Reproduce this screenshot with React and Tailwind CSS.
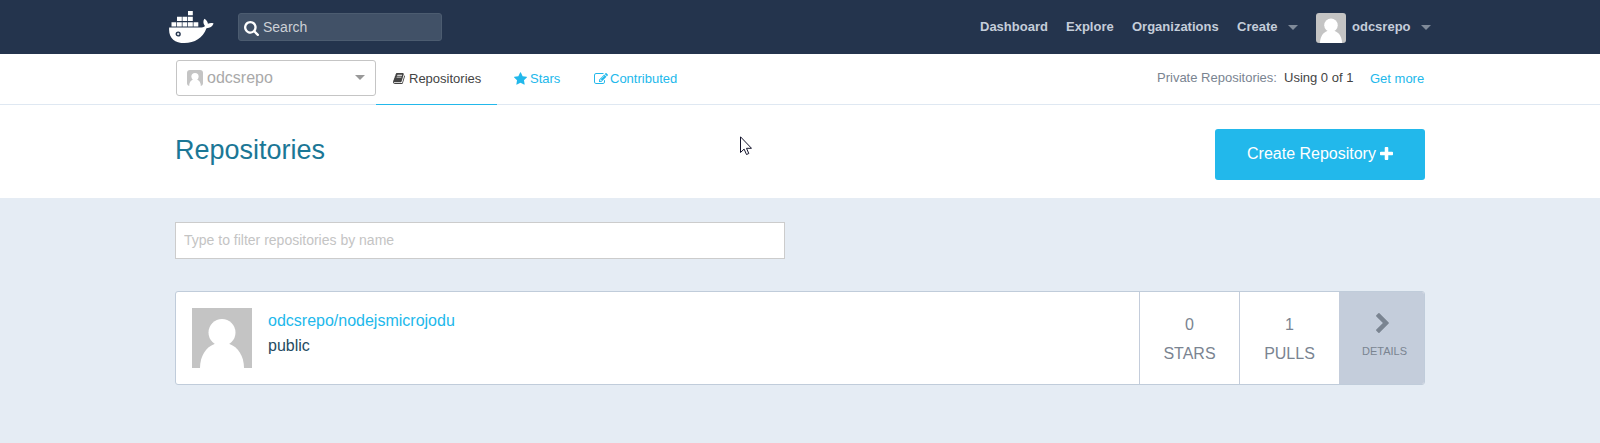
import React from "react";

const ICONS = {
  search: {
    box: "64 128 1664 1664",
    d: "M1216 832q0-185-131.5-316.5t-316.5-131.5-316.5 131.5-131.5 316.5 131.5 316.5 316.5 131.5 316.5-131.5 131.5-316.5zm512 832q0 52-38 90t-90 38q-54 0-90-38l-343-342q-179 124-399 124-143 0-273.5-55.5t-225-150-150-225-55.5-273.5 55.5-273.5 150-225 225-150 273.5-55.5 273.5 55.5 225 150 150 225 55.5 273.5q0 220-124 399l343 343q37 37 37 90z",
  },
  book: {
    box: "64 128 1664 1536",
    d: "M1703 478q40 57 18 129l-275 906q-19 64-76.5 107.5t-122.5 43.5h-923q-77 0-148.5-53.5t-99.5-131.5q-24-67-2-127 0-4 3-27t4-37q1-8-3-21.5t-3-19.5q2-11 8-21t16.5-23.5 16.5-23.5q23-38 45-91.5t30-91.5q3-10 .5-30t-.5-28q3-11 17-28t17-23q21-36 42-92t25-90q1-9-2.5-32t.5-28q4-13 22-30.5t22-22.5q19-26 42.5-84.5t27.5-96.5q1-8-3-25.5t-2-26.5q2-8 9-18t18-23 17-21q8-12 16.5-30.5t15-35 16-36 19.5-32 26.5-23.5 36-11.5 47.5 5.5l-1 3q38-9 51-9h761q74 0 114 56t18 130l-274 906q-36 119-71.5 153.5t-128.5 34.5h-869q-27 0-38 15-11 16-1 43 24 70 144 70h923q29 0 56-15.5t35-41.5l300-987q7-22 5-57 38 15 59 43zm-1064 2q-4 13 2 22.5t20 9.5h608q13 0 25.5-9.5t16.5-22.5l21-64q4-13-2-22.5t-20-9.5h-608q-13 0-25.5 9.5t-16.5 22.5zm-83 256q-4 13 2 22.5t20 9.5h608q13 0 25.5-9.5t16.5-22.5l21-64q4-13-2-22.5t-20-9.5h-608q-13 0-25.5 9.5t-16.5 22.5z",
  },
  star: {
    box: "64 32 1664 1588",
    d: "M1728 647q0 22-26 48l-363 354 86 500q1 7 1 20 0 21-10.5 35.5t-30.5 14.5q-19 0-40-12l-449-236-449 236q-22 12-40 12-21 0-31.5-14.5t-10.5-35.5q0-6 2-20l86-500-364-354q-25-27-25-48 0-37 56-46l502-73 225-455q19-41 49-41t49 41l225 455 502 73q56 9 56 46z",
  },
  edit: {
    box: "0 128 1792 1408",
    d: "M888 1184l116-116-152-152-116 116v56h96v96h56zm440-720q-16-16-33 1l-350 350q-17 17-1 33t33-1l350-350q17-17 1-33zm80 594v190q0 119-84.5 203.5t-203.5 84.5h-832q-119 0-203.5-84.5t-84.5-203.5v-832q0-119 84.5-203.5t203.5-84.5h832q63 0 117 25 15 7 18 23 3 17-9 29l-49 49q-14 14-32 8-23-6-45-6h-832q-66 0-113 47t-47 113v832q0 66 47 113t113 47h832q66 0 113-47t47-113v-126q0-13 9-22l64-64q15-15 35-7t20 29zm-96-738l288 288-672 672h-288v-288zm444 132l-92 92-288-288 92-92q28-28 68-28t68 28l152 152q28 28 28 68t-28 68z",
  },
  plus: {
    box: "192 128 1408 1408",
    d: "M1600 736v192q0 40-28 68t-68 28h-416v416q0 40-28 68t-68 28h-192q-40 0-68-28t-28-68v-416h-416q-40 0-68-28t-28-68v-192q0-40 28-68t68-28h416v-416q0-40 28-68t68-28h192q40 0 68 28t28 68v416h416q40 0 68 28t28 68z",
  },
  chevron: {
    box: "346 26 1036 1612",
    d: "M1363 877l-742 742q-19 19-45 19t-45-19l-166-166q-19-19-19-45t19-45l531-531-531-531q-19-19-19-45t19-45l166-166q19-19 45-19t45 19l742 742q19 19 19 45t-19 45z",
  },
};

function Icon({ name, className }) {
  const { box, d } = ICONS[name];
  return (
    <svg viewBox={box} className={`shrink-0 fill-current ${className}`} aria-hidden="true">
      <path d={d} />
    </svg>
  );
}

function Avatar({ className }) {
  return (
    <svg viewBox="0 0 60 60" className={`shrink-0 bg-[#c4c4c4] ${className}`} aria-hidden="true">
      <circle cx="30" cy="24.500" r="13.500" fill="#fff" />
      <path d="M8 60C8 48 14 39 22.500 36h15C46 39 52 48 52 60z" fill="#fff" />
    </svg>
  );
}

function Caret({ className }) {
  return (
    <svg viewBox="0 0 10 5" className={`h-[5px] w-[10px] shrink-0 fill-current ${className}`} aria-hidden="true">
      <path d="M0 0h10L5 5z" />
    </svg>
  );
}

function Whale() {
  return (
    <svg viewBox="0 0 45 32" className="h-8 w-[45px] shrink-0" aria-hidden="true">
      <g fill="#fff">
        <path d="M19 0h4.800v4.200H19zM8 5.700h4.800v4.300H8zM13.500 5.700h4.800v4.300h-4.800zM19 5.700h4.800v4.300H19zM2.500 11.200h4.800v4.200H2.500zM8 11.200h4.800v4.200H8zM13.500 11.200h4.800v4.200h-4.800zM19 11.200h4.800v4.200H19zM24.500 11.200h4.800v4.200h-4.800z" />
        <path d="M.2 16.600H31c2.100 0 4-.5 5-1.600-1.900-2.200-2.100-4.800-.6-7.200 2.100 1.300 3.300 2.900 3.500 5 2-.9 3.800-.9 5.700-.4-1.200 2.900-3.500 4.600-7.100 4.800C33.800 27 25.500 32 15.500 32 5.300 32-.8 26.500.2 16.600z" />
      </g>
      <circle cx="9.200" cy="23" r="1.900" fill="#dfe4ea" stroke="#24344d" strokeWidth="1.400" />
    </svg>
  );
}

function Header() {
  return (
    <header className="flex h-[54px] items-center bg-[#24344d] pl-[169px]">
      <Whale />
      <div className="ml-6 flex h-7 w-[204px] items-center rounded-[3px] border border-[#4c5c70] bg-[#415167] pl-[5px] text-sm text-[#ccd0d6]">
        <Icon name="search" className="mt-[3px] h-[15px] w-[15px] text-white" />
        <span className="ml-1">Search</span>
      </div>
      <nav className="ml-[538px] flex items-center whitespace-nowrap pt-0.5 text-[13px] leading-[18px] font-bold text-[#c4cdda]">
        <a className="-mt-0.5 w-[86px]">Dashboard</a>
        <a className="-mt-0.5 w-[66px]">Explore</a>
        <a className="-mt-0.5 w-[105px]">Organizations</a>
        <a className="-mt-0.5 w-[51px]">Create</a>
        <Caret className="-mt-0.5 text-[#7f8a99]" />
        <Avatar className="ml-[18px] h-[30px] w-[30px] rounded-[3px]" />
        <a className="-mt-0.5 ml-1.5 w-[69px]">odcsrepo</a>
        <Caret className="-mt-0.5 text-[#7f8a99]" />
      </nav>
    </header>
  );
}

function SubNav() {
  return (
    <div className="flex h-[51px] border-b border-[#dfe8f2] pl-[176px] text-[13px] text-[#22b8eb]">
      <div className="mt-1.5 flex h-9 w-[200px] items-center rounded-[3px] border border-[#c5c5c5] pr-[10px] pl-[10px] text-base text-[#a9a9a9]">
        <Avatar className="h-4 w-4 rounded-[3px]" />
        <span className="ml-1 grow">odcsrepo</span>
        <Caret className="-mt-px text-[#999]" />
      </div>
      <div className="-mb-px flex h-[51px] w-[121px] items-center border-b border-[#22b8eb] pb-[1px] pl-[17px] text-[#444]">
        <Icon name="book" className="h-[11px] w-3" />
        <span className="ml-1">Repositories</span>
      </div>
      <div className="ml-[17px] flex h-[50px] w-20 items-center">
        <Icon name="star" className="h-[13px] w-[13px] -translate-y-px" />
        <span className="ml-[3px]">Stars</span>
      </div>
      <div className="flex h-[50px] items-center">
        <Icon name="edit" className="h-[11px] w-[14px] -translate-y-px" />
        <span className="ml-0.5">Contributed</span>
      </div>
      <div className="ml-auto flex h-[50px] w-[443px] items-center whitespace-nowrap">
        <span className="w-[127px] pb-0.5 text-[#7a8491]">Private Repositories:</span>
        <span className="w-[86px] pb-0.5 text-[#444]">Using 0 of 1</span>
        <span>Get more</span>
      </div>
    </div>
  );
}

function Stat({ value, label }) {
  return (
    <div className="flex w-[100px] flex-col items-center border-l border-[#c4cddb] pt-[18px] text-base leading-[29px] text-[#7a8491]">
      <span>{value}</span>
      <span>{label}</span>
    </div>
  );
}

function RepositoryCard() {
  return (
    <div className="mt-8 flex h-[94px] w-[1250px] overflow-hidden rounded-[3px] border border-[#c0ccda] bg-white">
      <div className="flex grow pt-4 pl-4">
        <Avatar className="h-[60px] w-[60px]" />
        <div className="ml-4 text-base leading-[25px]">
          <div className="text-[#22b8eb]">odcsrepo/nodejsmicrojodu</div>
          <div className="text-[#254b61]">public</div>
        </div>
      </div>
      <Stat value="0" label="STARS" />
      <Stat value="1" label="PULLS" />
      <div className="flex w-[85px] flex-col bg-[#c4cddb] pt-[21px] pl-[23px] text-[11px] leading-4 text-[#7a8491]">
        <Icon name="chevron" className="ml-[14px] h-5 w-[13px]" />
        <span className="mt-2.5">DETAILS</span>
      </div>
    </div>
  );
}

export default function App() {
  return (
    <div className="relative h-[443px] w-[1600px] overflow-hidden bg-white font-['Liberation_Sans',Arial,sans-serif]">
      <Header />
      <SubNav />
      <section className="flex h-[93px] items-start justify-between pt-6 pr-[175px] pl-[175px]">
        <h1 className="mt-[5px] text-[27px] leading-8 text-[#1b7796]">Repositories</h1>
        <button className="flex h-[51px] w-[210px] items-center rounded-[3px] bg-[#22b8eb] pb-0.5 pl-8 text-base text-white">
          <span>Create Repository</span>
          <Icon name="plus" className="ml-1 h-[13px] w-[13px]" />
        </button>
      </section>
      <main className="h-[245px] bg-[#e5ecf4] pt-6 pl-[175px]">
        <input
          className="block h-[37px] w-[610px] border border-[#ccc] bg-white px-2 pb-0.5 text-sm placeholder:text-[#c4c4c4]"
          placeholder="Type to filter repositories by name"
        />
        <RepositoryCard />
      </main>
      <svg viewBox="0 0 12 20" className="absolute top-[136px] left-[740px] h-5 w-3" aria-hidden="true">
        <path
          d="M.5.8v15.700l3.600-3.400 2.400 5.400 2.300-1-2.300-5.200h5z"
          fill="#fff"
          stroke="#14142b"
          strokeWidth="1"
        />
      </svg>
    </div>
  );
}
